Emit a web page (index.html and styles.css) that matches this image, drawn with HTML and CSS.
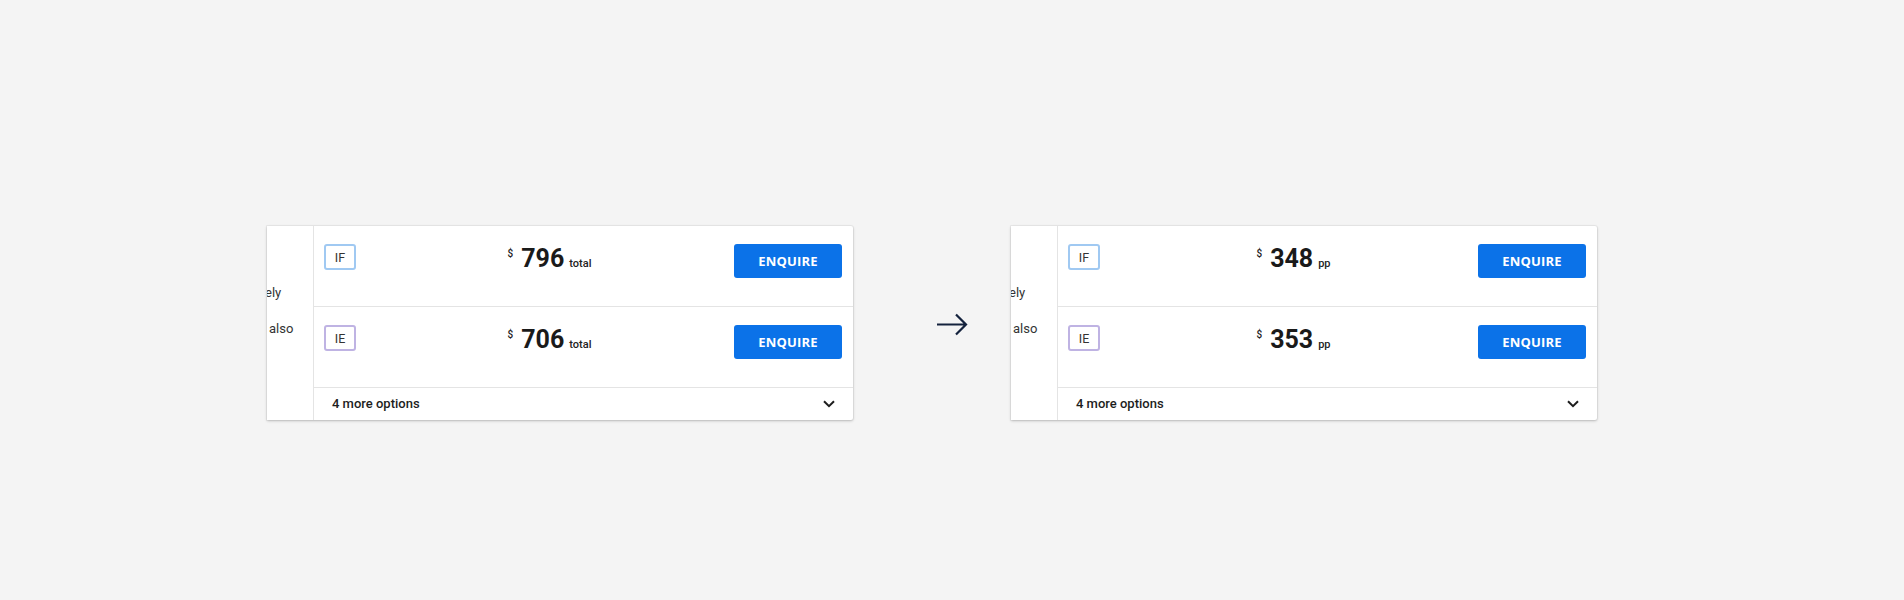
FILE: index.html
```html
<!DOCTYPE html>
<html lang="en">
<head>
<meta charset="utf-8">
<title>Fare options</title>
<link rel="stylesheet" href="styles.css">
</head>
<body>
<div class="stage">
  <div class="card">
    <div class="side">
      <div class="side-text">
        <span class="line">ely</span>
        <span class="line line-indent">also</span>
      </div>
    </div>
    <div class="main">
      <div class="row">
        <span class="badge badge-if">IF</span>
        <div class="price"><span class="cur">$</span><span class="amt">796</span><span class="unit">total</span></div>
        <button class="btn">ENQUIRE</button>
      </div>
      <div class="row">
        <span class="badge badge-ie">IE</span>
        <div class="price"><span class="cur">$</span><span class="amt">706</span><span class="unit">total</span></div>
        <button class="btn">ENQUIRE</button>
      </div>
      <div class="more">
        <span>4 more options</span>
        <svg class="chev" width="12" height="8" viewBox="0 0 12 8"><path d="M1 1.2 L6 6.2 L11 1.2" fill="none" stroke="#1d1d1d" stroke-width="2"/></svg>
      </div>
    </div>
  </div>

  <svg class="arrow" width="31" height="23" viewBox="0 0 31 23"><path d="M0 11.5 H29 M19 1.5 L29 11.5 L19 21.5" fill="none" stroke="#14223d" stroke-width="2.2"/></svg>

  <div class="card">
    <div class="side">
      <div class="side-text">
        <span class="line">ely</span>
        <span class="line line-indent">also</span>
      </div>
    </div>
    <div class="main">
      <div class="row">
        <span class="badge badge-if">IF</span>
        <div class="price"><span class="cur">$</span><span class="amt">348</span><span class="unit">pp</span></div>
        <button class="btn">ENQUIRE</button>
      </div>
      <div class="row">
        <span class="badge badge-ie">IE</span>
        <div class="price"><span class="cur">$</span><span class="amt">353</span><span class="unit">pp</span></div>
        <button class="btn">ENQUIRE</button>
      </div>
      <div class="more">
        <span>4 more options</span>
        <svg class="chev" width="12" height="8" viewBox="0 0 12 8"><path d="M1 1.2 L6 6.2 L11 1.2" fill="none" stroke="#1d1d1d" stroke-width="2"/></svg>
      </div>
    </div>
  </div>
</div>
</body>
</html>
```

FILE: styles.css
```css
* { box-sizing: border-box; }

html, body {
  margin: 0;
  background: #f4f4f4;
  font-family: Roboto, "Liberation Sans", sans-serif;
  color: #222;
}

.stage {
  display: flex;
  align-items: flex-start;
  height: 600px;
  padding: 226px 0 0 267px;
}

.card {
  display: flex;
  width: 586px;
  background: #fff;
  box-shadow: 0 0 0 1px rgba(0, 0, 0, 0.04), 0 1px 3px rgba(0, 0, 0, 0.22);
  border-radius: 0 2px 2px 0;
}

.side {
  flex: none;
  width: 47px;
  overflow: hidden;
  border-right: 1px solid #e4e4e4;
  padding-top: 59px;
  font-size: 13px;
  line-height: 16px;
  color: #333;
}

.side-text {
  display: flex;
  flex-direction: column;
  gap: 20px;
  margin-left: -2px;
  white-space: nowrap;
}

.line-indent { padding-left: 4px; }

.main {
  flex: 1;
  display: flex;
  flex-direction: column;
}

.row {
  display: flex;
  align-items: flex-start;
  height: 81px;
  padding: 18px 11px 0 10px;
  border-bottom: 1px solid #e4e4e4;
}

.badge {
  flex: none;
  width: 32px;
  height: 26px;
  display: flex;
  align-items: center;
  justify-content: center;
  border: 2px solid;
  border-radius: 3px;
  font-size: 12.5px;
  color: #333;
}

.badge-if { border-color: #a0c9f2; }
.badge-ie { border-color: #bfb3e3; }

.price {
  flex: 1;
  text-align: center;
  padding-left: 9px;
  line-height: 30px;
  white-space: nowrap;
}

.cur {
  font-size: 10px;
  font-weight: 500;
  line-height: 10px;
  vertical-align: 10px;
  margin-right: 8px;
}

.amt {
  font-size: 25px;
  font-weight: 700;
  color: #1a1a1a;
}

.unit {
  font-size: 11px;
  font-weight: 500;
  line-height: 10px;
  margin-left: 5px;
}

.btn {
  flex: none;
  width: 108px;
  height: 34px;
  border: none;
  border-radius: 3px;
  background: #0b72e8;
  color: #fff;
  font-family: "Open Sans", "Liberation Sans", sans-serif;
  font-size: 13px;
  font-weight: 700;
  letter-spacing: 0.2px;
  padding: 0;
}

.more {
  display: flex;
  align-items: center;
  justify-content: space-between;
  height: 32px;
  padding: 0 18px 1px;
  font-size: 13px;
  font-weight: 500;
  color: #1d1d1d;
}

.arrow {
  flex: none;
  margin: 87px 43px 0 84px;
}
```
